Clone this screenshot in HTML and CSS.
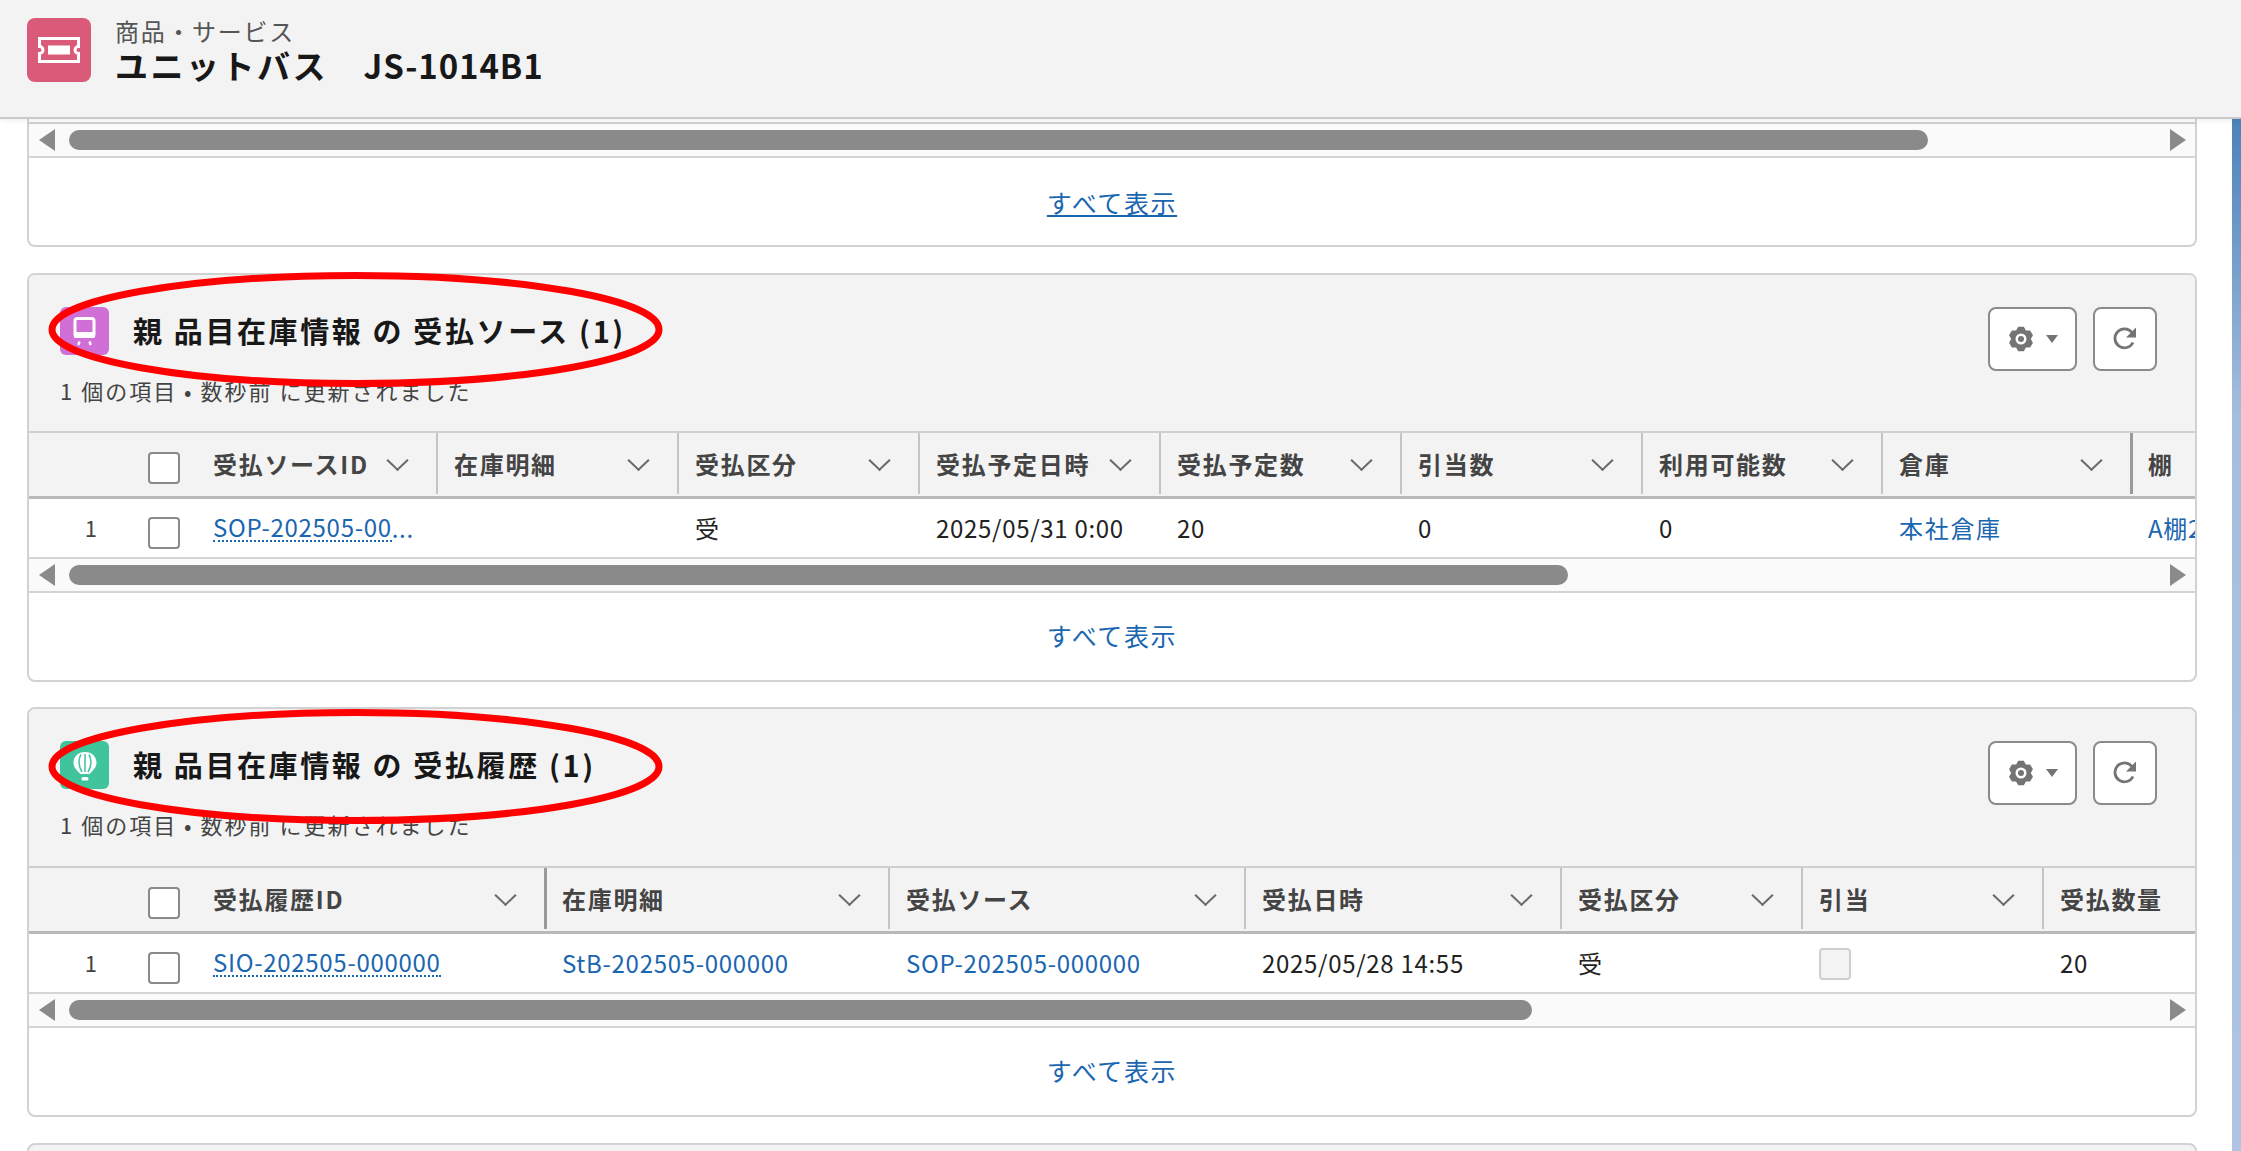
FILE: index.html
```html
<!DOCTYPE html>
<html lang="ja">
<head>
<meta charset="utf-8">
<title>ユニットバス JS-1014B1</title>
<link rel="stylesheet" href="styles.css">
</head>
<body>
<header class="page-head">
  <div class="obj-icon">
    <svg viewBox="0 0 64 64" width="64" height="64"><path class="ticket" d="M12.500 20.500h39v8a3.500 3.500 0 0 0 0 7v8h-39v-8a3.500 3.500 0 0 0 0-7z"/><rect class="ticket-in" x="21" y="27.500" width="22" height="9"/></svg>
  </div>
  <div class="obj-text">
    <div class="obj-type">商品・サービス</div>
    <div class="obj-name">ユニットバス　<span class="obj-code">JS-1014B1</span></div>
  </div>
</header>
<div class="page-body">
  <main class="content">
    <section class="card card-cut">
      <div class="sliver"></div>
      <div class="hscroll"><span class="arrow-l"></span><div class="track"><div class="thumb thumb-a"></div></div><span class="arrow-r"></span></div>
      <div class="card-foot"><a class="view-all view-all-u">すべて表示</a></div>
    </section>

    <section class="card">
      <div class="card-head">
        <div class="title-row">
          <span class="list-icon list-icon-purple">
            <svg viewBox="0 0 48 48" width="48" height="48"><rect class="ico-line" x="15" y="11.500" width="19" height="18" rx="2.500"/><rect class="ico-solid" x="14" y="25" width="21" height="6" rx="1.500"/><path class="ico-dash" d="M19.500 34.500l-1.200 3.500M29.500 34.500l1.200 3.500"/></svg>
          </span>
          <h2 class="card-title">親 品目在庫情報 の 受払ソース (1)</h2>
        </div>
        <p class="card-sub">1 個の項目 • 数秒前 に更新されました</p>
        <div class="actions">
          <button class="btn btn-gear" type="button" aria-label="設定">
            <svg viewBox="0 0 26 26" width="26" height="26"><path class="gear" d="M10.190.820H15.810L17.900 4.510 22.140 4.470 24.950 9.350 22.800 13 24.950 16.650 22.140 21.530 17.900 21.490 15.810 25.180H10.190L8.100 21.490 3.860 21.530 1.050 16.650 3.200 13 1.050 9.350 3.860 4.470 8.100 4.510z"/><circle class="gear-hole" cx="13" cy="13" r="5.500"/><circle class="gear-dot" cx="13" cy="13" r="3"/></svg>
            <span class="caret"></span>
          </button>
          <button class="btn btn-refresh" type="button" aria-label="更新">
            <svg viewBox="0 0 26 26" width="26" height="26"><path class="refresh" d="M21 16.500A9.500 9.500 0 1 1 20 6.500"/><path class="refresh-tip" d="M24 1.500v10h-10z"/></svg>
          </button>
        </div>
      </div>
      <div class="tbl tbl-source">
        <div class="tr th-row">
          <div class="c-num"></div>
          <div class="c-check"><span class="cb"></span></div>
          <div class="th th-first">受払ソースID<i class="chev"></i></div>
          <div class="th">在庫明細<i class="chev"></i></div>
          <div class="th">受払区分<i class="chev"></i></div>
          <div class="th">受払予定日時<i class="chev"></i></div>
          <div class="th">受払予定数<i class="chev"></i></div>
          <div class="th">引当数<i class="chev"></i></div>
          <div class="th">利用可能数<i class="chev"></i></div>
          <div class="th">倉庫<i class="chev"></i></div>
          <div class="th th-strong">棚</div>
        </div>
        <div class="tr td-row">
          <div class="c-num num">1</div>
          <div class="c-check"><span class="cb"></span></div>
          <div class="td td-first"><a class="link link-dot">SOP-202505-00</a><a class="link">...</a></div>
          <div class="td"></div>
          <div class="td cjk">受</div>
          <div class="td">2025/05/31 0:00</div>
          <div class="td">20</div>
          <div class="td">0</div>
          <div class="td">0</div>
          <div class="td"><a class="link cjk">本社倉庫</a></div>
          <div class="td"><a class="link">A棚2</a></div>
        </div>
      </div>
      <div class="hscroll"><span class="arrow-l"></span><div class="track"><div class="thumb thumb-b"></div></div><span class="arrow-r"></span></div>
      <div class="card-foot"><a class="view-all">すべて表示</a></div>
      <svg class="mark" viewBox="0 0 615 115" width="615" height="115"><ellipse cx="307.500" cy="57.500" rx="303.500" ry="54"/></svg>
    </section>

    <section class="card card-third">
      <div class="card-head">
        <div class="title-row">
          <span class="list-icon list-icon-green">
            <svg viewBox="0 0 48 48" width="48" height="48"><path class="ico-fill" d="M25 11c-6.800 0-11.500 4.700-11.500 10.800 0 4.700 3.500 7.700 7 11.200h9c3.500-3.500 7-6.500 7-11.200C36.500 15.700 31.800 11 25 11z"/><path class="ico-cut" d="M25 13v18M21 13.500c-3 4.500-2.500 12 1 17.500M29 13.500c3 4.500 2.500 12-1 17.500"/><rect class="ico-solid" x="21.500" y="36" width="7" height="3.500" rx="1.500"/></svg>
          </span>
          <h2 class="card-title">親 品目在庫情報 の 受払履歴 (1)</h2>
        </div>
        <p class="card-sub">1 個の項目 • 数秒前 に更新されました</p>
        <div class="actions">
          <button class="btn btn-gear" type="button" aria-label="設定">
            <svg viewBox="0 0 26 26" width="26" height="26"><path class="gear" d="M10.190.820H15.810L17.900 4.510 22.140 4.470 24.950 9.350 22.800 13 24.950 16.650 22.140 21.530 17.900 21.490 15.810 25.180H10.190L8.100 21.490 3.860 21.530 1.050 16.650 3.200 13 1.050 9.350 3.860 4.470 8.100 4.510z"/><circle class="gear-hole" cx="13" cy="13" r="5.500"/><circle class="gear-dot" cx="13" cy="13" r="3"/></svg>
            <span class="caret"></span>
          </button>
          <button class="btn btn-refresh" type="button" aria-label="更新">
            <svg viewBox="0 0 26 26" width="26" height="26"><path class="refresh" d="M21 16.500A9.500 9.500 0 1 1 20 6.500"/><path class="refresh-tip" d="M24 1.500v10h-10z"/></svg>
          </button>
        </div>
      </div>
      <div class="tbl tbl-history">
        <div class="tr th-row">
          <div class="c-num"></div>
          <div class="c-check"><span class="cb"></span></div>
          <div class="th th-first">受払履歴ID<i class="chev"></i></div>
          <div class="th th-strong">在庫明細<i class="chev"></i></div>
          <div class="th">受払ソース<i class="chev"></i></div>
          <div class="th">受払日時<i class="chev"></i></div>
          <div class="th">受払区分<i class="chev"></i></div>
          <div class="th">引当<i class="chev"></i></div>
          <div class="th">受払数量</div>
        </div>
        <div class="tr td-row">
          <div class="c-num num">1</div>
          <div class="c-check"><span class="cb"></span></div>
          <div class="td td-first"><a class="link link-dot">SIO-202505-000000</a></div>
          <div class="td"><a class="link">StB-202505-000000</a></div>
          <div class="td"><a class="link">SOP-202505-000000</a></div>
          <div class="td">2025/05/28 14:55</div>
          <div class="td cjk">受</div>
          <div class="td"><span class="cb cb-off"></span></div>
          <div class="td">20</div>
        </div>
      </div>
      <div class="hscroll"><span class="arrow-l"></span><div class="track"><div class="thumb thumb-c"></div></div><span class="arrow-r"></span></div>
      <div class="card-foot"><a class="view-all">すべて表示</a></div>
      <svg class="mark" viewBox="0 0 615 115" width="615" height="115"><ellipse cx="307.500" cy="57.500" rx="303.500" ry="54"/></svg>
    </section>

    <section class="card card-next"></section>
  </main>
  <div class="stripe"></div>
</div>
</body>
</html>
```

FILE: styles.css
```css
* { box-sizing: border-box; }
html, body { margin: 0; height: 100%; }
body {
  height: 1151px;
  overflow: hidden;
  display: flex;
  flex-direction: column;
  background: #fff;
  font-family: "Noto Sans CJK JP", "Noto Sans", sans-serif;
  color: #181818;
}

.page-head {
  position: relative;
  z-index: 2;
  flex: none;
  height: 119px;
  padding: 18px 0 0 27px;
  display: flex;
  gap: 24px;
  background: #f3f3f3;
  border-bottom: 2px solid #c9c9c9;
  box-shadow: 0 2px 6px rgba(0, 0, 0, .06);
}
.obj-icon { width: 64px; height: 64px; border-radius: 8px; background: #da5a79; }
.obj-icon svg { display: block; }
.ticket { fill: none; stroke: #fff; stroke-width: 3; }
.ticket-in { fill: #fff; }
.obj-text { margin-top: -2px; }
.obj-type { font-size: 24px; line-height: 29px; letter-spacing: 1.700px; color: #555; }
.obj-name { font-size: 33px; line-height: 40px; font-weight: 700; letter-spacing: 2.500px; color: #181818; }
.obj-code { letter-spacing: .900px; }

.page-body { flex: 1; min-height: 0; display: flex; margin-top: -1px; }
.content { width: 2232px; flex: none; padding: 0 35px 0 27px; }
.stripe {
  flex: 1;
  background: linear-gradient(180deg, #4a82ba 0, #6f9ac8 120px, #a6bedd 300px, #aec4e2 1030px);
}

.card {
  position: relative;
  margin-top: 26px;
  border: 2px solid #d2d2d2;
  border-radius: 8px;
  background: #fff;
}
.card-cut { margin-top: 0; height: 129px; border-top: 0; border-radius: 0 0 8px 8px; }
.card-third { margin-top: 25px; }
.card-next { height: 60px; background: #f3f3f3; }
.sliver { height: 6px; border-bottom: 2px solid #d0d0d0; }

.card-head {
  position: relative;
  height: 156px;
  background: #f3f3f3;
  border-radius: 6px 6px 0 0;
  padding: 24px 0 0 31px;
}
.card-third .card-head { height: 157px; }
.title-row { display: flex; align-items: center; gap: 24px; height: 48px; margin-top: 8px; }
.list-icon { flex: none; width: 49px; height: 48px; border-radius: 6px; }
.list-icon svg { display: block; }
.list-icon-purple { background: #d06fd5; }
.list-icon-green { background: #3fc49c; }
.ico-line { fill: none; stroke: #fff; stroke-width: 3; }
.ico-dash { fill: none; stroke: #fff; stroke-width: 2.500; }
.ico-fill { fill: #fff; }
.ico-cut { fill: none; stroke: #3fc49c; stroke-width: 1.500; }
.ico-solid { fill: #fff; }
.card-title { margin: 0 0 2px; font-size: 29px; line-height: 36px; font-weight: 700; letter-spacing: 2.600px; color: #181818; white-space: nowrap; }
.card-sub { margin: 20px 0 0; font-size: 22px; line-height: 30px; letter-spacing: 2px; color: #444; white-space: nowrap; }

.actions { position: absolute; top: 32px; right: 38px; display: flex; gap: 16px; }
.btn {
  height: 64px;
  padding: 0;
  border: 2px solid #8a8a8a;
  border-radius: 8px;
  background: #fff;
  display: flex;
  align-items: center;
  justify-content: center;
}
.btn-gear { width: 89px; gap: 12px; }
.btn-refresh { width: 64px; }
.gear { fill: #747474; }
.gear-hole { fill: #fff; }
.gear-dot { fill: #747474; }
.caret { width: 0; height: 0; border-style: solid; border-width: 8px 6px 0; border-color: #747474 transparent transparent; }
.refresh { fill: none; stroke: #747474; stroke-width: 2.800; }
.refresh-tip { fill: #747474; }

.tbl { overflow: hidden; }
.tr { display: grid; }
.tbl-source .tr { grid-template-columns: 119px 65px 223px 241px 241px 241px 241px 241px 240px 249px 1fr; }
.tbl-history .tr { grid-template-columns: 119px 65px 331px 344px 356px 316px 241px 241px 1fr; }
.th-row { height: 68px; background: #f3f3f3; border-top: 2px solid #cfcfcf; border-bottom: 3px solid #b9b9b9; }
.td-row { height: 60px; background: #fff; border-bottom: 2px solid #d4d4d4; }
.c-num, .c-check, .th, .td { display: flex; align-items: center; min-width: 0; white-space: nowrap; overflow: hidden; }
.th-row .c-check { padding-top: 7px; }
.td-row .c-check { padding-top: 10px; }
.num { justify-content: flex-end; padding: 0 51px 2px 0; font-size: 22px; color: #444; }
.th {
  border-left: 2px solid #c4c4c4;
  padding-left: 16px;
  margin-bottom: 2px;
  font-size: 24px;
  font-weight: 700;
  letter-spacing: 1.700px;
  color: #444;
}
.th-first { border-left: 0; padding-left: 0; }
.th-strong { border-left: 3px solid #9a9a9a; padding-left: 15px; }
.chev {
  flex: none;
  width: 15px;
  height: 15px;
  margin: -6px 31px 0 auto;
  border-right: 2px solid #6a6a6a;
  border-bottom: 2px solid #6a6a6a;
  transform: scaleX(1.050) rotate(45deg);
}
.td { padding: 0 0 2px 18px; font-size: 24px; letter-spacing: .700px; color: #222; }
.td-first { padding-left: 0; }
.cjk { letter-spacing: 1.700px; }
.link { color: #1b66b0; text-decoration: none; }
.link-dot { border-bottom: 2px dotted #1b66b0; line-height: 27px; }
.cb { display: block; flex: none; width: 32px; height: 32px; border: 2px solid #8a8a8a; border-radius: 4px; background: #fff; }
.cb-off { margin-top: 4px; background: #f3f3f3; border-color: #cfcfcf; }

.hscroll { height: 34px; display: flex; align-items: center; padding: 0 9px 0 10px; background: #fafafa; border-bottom: 2px solid #d4d4d4; }
.track { flex: 1; margin: 0 14px; }
.thumb { height: 20px; border-radius: 10px; background: #8a8a8a; }
.thumb-a { width: 1859px; }
.thumb-b { width: 1499px; }
.thumb-c { width: 1463px; }
.arrow-l, .arrow-r { flex: none; width: 0; height: 0; border-style: solid; border-color: transparent; }
.arrow-l { border-width: 11px 16px 11px 0; border-right-color: #8a8a8a; }
.arrow-r { border-width: 11px 0 11px 16px; border-left-color: #8a8a8a; }

.card-foot { height: 87px; padding-bottom: 4px; display: flex; justify-content: center; align-items: center; }
.card-cut .card-foot { height: 88px; padding-bottom: 0; }
.view-all { font-size: 25px; line-height: 30px; letter-spacing: 1.600px; color: #1b66b0; }
.view-all-u { text-decoration: underline; }

.mark { position: absolute; left: 19px; top: -3px; overflow: visible; }
.card-third .mark { top: 0; }
.mark ellipse { fill: none; stroke: #f00; stroke-width: 7; }
```
